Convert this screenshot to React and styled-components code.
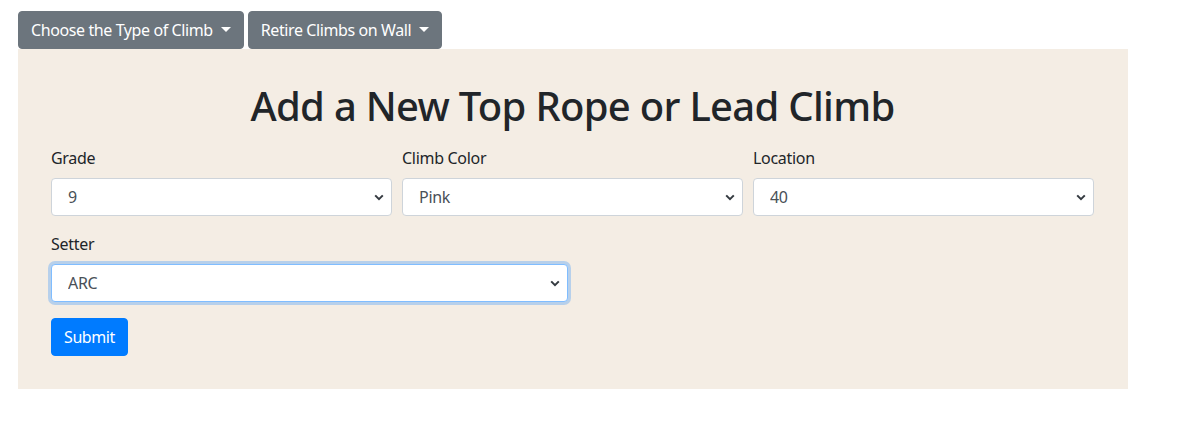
import React from 'react';
import styled, { createGlobalStyle } from 'styled-components';

const GlobalStyle = createGlobalStyle`
  body {
    margin: 0;
    background: #fff;
    font-family: "Noto Sans", "Open Sans", sans-serif;
    letter-spacing: -0.3px;
    color: #212529;
  }
`;

const Chevron = () => (
  <svg width="10" height="7" viewBox="0 0 10 7">
    <path d="M1.2 1.4 L5 5.2 L8.8 1.4" fill="none" stroke="#343a40" strokeWidth="2" />
  </svg>
);

const SelectField = ({ label, value, options, focused }) => (
  <Field>
    <Label>{label}</Label>
    <SelectWrap>
      <Select defaultValue={value} $focused={focused}>
        {options.map((o) => (
          <option key={o}>{o}</option>
        ))}
      </Select>
      <Arrow>
        <Chevron />
      </Arrow>
    </SelectWrap>
  </Field>
);

const App = () => {
  return (
    <Page>
      <GlobalStyle />
      <Toolbar>
        <DropButton>Choose the Type of Climb</DropButton>
        <DropButton>Retire Climbs on Wall</DropButton>
      </Toolbar>
      <Panel>
        <Title>Add a New Top Rope or Lead Climb</Title>
        <Row $cols={3}>
          <SelectField label="Grade" value="9" options={['5', '6', '7', '8', '9', '10', '11']} />
          <SelectField label="Climb Color" value="Pink" options={['Red', 'Blue', 'Pink', 'Green']} />
          <SelectField label="Location" value="40" options={['38', '39', '40', '41']} />
        </Row>
        <Row $cols={2}>
          <SelectField label="Setter" value="ARC" options={['ARC', 'JDS', 'MKL']} focused />
        </Row>
        <SubmitButton>Submit</SubmitButton>
      </Panel>
    </Page>
  );
};

export default App;

const Page = styled.div`
  padding: 11px 0 0 18px;
`;

const Toolbar = styled.div`
  display: flex;
  gap: 4px;
`;

const DropButton = styled.button`
  display: inline-flex;
  align-items: center;
  height: 38px;
  padding: 0 12px;
  border: 1px solid #6c757d;
  border-radius: 4px;
  background: #6c757d;
  color: #fff;
  font-family: inherit;
  font-size: 16px;
  letter-spacing: -0.4px;
  line-height: 24px;
  cursor: pointer;

  &::after {
    content: "";
    display: inline-block;
    margin-left: 8px;
    border-top: 5px solid #fff;
    border-left: 5px solid transparent;
    border-right: 5px solid transparent;
    transform: translateY(-1px);
  }
`;

const Panel = styled.div`
  width: 1110px;
  box-sizing: border-box;
  background: #f4ede4;
  padding: 33px 34px 33px 33px;
`;

const Title = styled.h1`
  margin: 0 0 16px;
  text-align: center;
  font-size: 40px;
  font-weight: 500;
  letter-spacing: -0.7px;
  line-height: 48px;
  color: #212529;
`;

const Row = styled.div`
  display: grid;
  grid-template-columns: repeat(${(p) => p.$cols}, 1fr);
  column-gap: 10px;
  margin-bottom: 16px;
`;

const Field = styled.div`
  display: flex;
  flex-direction: column;
`;

const Label = styled.label`
  font-size: 16px;
  line-height: 24px;
  margin-bottom: 8px;
`;

const SelectWrap = styled.div`
  position: relative;
`;

const Select = styled.select`
  appearance: none;
  width: 100%;
  height: 38px;
  box-sizing: border-box;
  padding: 0 30px 0 16px;
  background: #fff;
  border: 1px solid ${(p) => (p.$focused ? '#80bdff' : '#ced4da')};
  border-radius: 4px;
  box-shadow: ${(p) => (p.$focused ? '0 0 0 3px rgba(0, 123, 255, 0.25)' : 'none')};
  font-family: inherit;
  font-size: 16px;
  letter-spacing: inherit;
  color: #495057;
  outline: none;
`;

const Arrow = styled.span`
  position: absolute;
  right: 8px;
  top: 16px;
  line-height: 0;
  pointer-events: none;
`;

const SubmitButton = styled.button`
  height: 38px;
  padding: 0 12px;
  border: 1px solid #007bff;
  border-radius: 4px;
  background: #007bff;
  color: #fff;
  font-family: inherit;
  font-size: 16px;
  letter-spacing: -0.4px;
  line-height: 24px;
  cursor: pointer;
`;
